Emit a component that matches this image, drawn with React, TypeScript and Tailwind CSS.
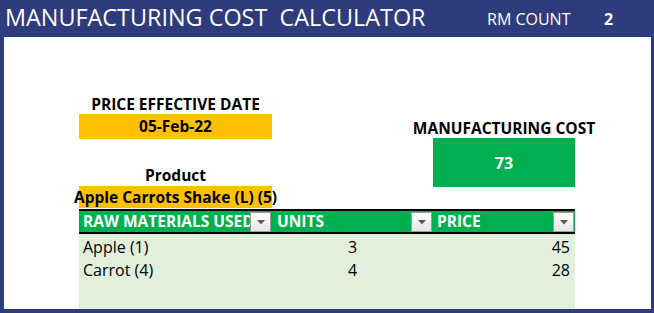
import React from 'react';

const rows = [
  { name: 'Apple (1)', units: 3, price: 45 },
  { name: 'Carrot (4)', units: 4, price: 28 },
];

function FilterButton() {
  return (
    <div className="absolute right-[1px] top-[1px] w-[21px] h-[20px] border border-[#9c9c9c] bg-gradient-to-b from-white to-[#e6e6e6] flex items-center justify-center">
      <svg width="8" height="5" viewBox="0 0 8 5">
        <path d="M0 0 L8 0 L4 4.5 Z" fill="#5a5a5a" />
      </svg>
    </div>
  );
}

export default function App() {
  return (
    <div className="w-[654px] h-[313px] bg-[#2e3b7c] flex flex-col font-['Open_Sans',sans-serif] overflow-hidden">
      {/* Title band */}
      <div className="h-[37px] flex items-center text-white shrink-0">
        <div className="pl-[5px] w-[487px] text-[23.4px] leading-none whitespace-pre -mt-[1px]">
          MANUFACTURING COST  CALCULATOR
        </div>
        <div className="w-[117px] text-[16px] leading-none">RM COUNT</div>
        <div className="text-[16px] font-bold leading-none">2</div>
      </div>

      {/* Sheet */}
      <div className="flex-1 ml-[4px] mr-[3px] mb-[4px] bg-white pl-[75px] text-black">
        <div className="flex">
          {/* Left column */}
          <div className="w-[193px] pt-[56px] flex flex-col text-[15.5px] font-bold">
            <div className="h-[21px] leading-[22px] text-center">PRICE EFFECTIVE DATE</div>
            <div className="h-[25px] leading-[25px] bg-[#ffc000] text-center">05-Feb-22</div>
            <div className="h-[26px]" />
            <div className="h-[21px] leading-[21px] text-center">Product</div>
            <div className="h-[22px] leading-[22px] bg-[#ffc000] flex justify-center whitespace-nowrap">
              <span>Apple Carrots Shake (L) (5)</span>
            </div>
          </div>

          {/* Right column */}
          <div className="ml-[161px] w-[142px] pt-[82px] flex flex-col text-[15.5px] font-bold">
            <div className="h-[18px] leading-[18px] flex justify-center whitespace-nowrap">
              <span>MANUFACTURING COST</span>
            </div>
            <div className="mt-[1px] h-[49px] bg-[#00b050] text-white text-[16px] flex items-center justify-center">
              73
            </div>
          </div>
        </div>

        {/* Table */}
        <div className="w-[496px] mt-[1px] border-t-2 border-black">
          <div className="grid grid-cols-[193px_161px_142px] h-[23px] bg-[#00b050] border-b-2 border-black text-white font-bold text-[15.5px]">
            <div className="relative pl-[4px] leading-[21px] overflow-hidden whitespace-nowrap">
              RAW MATERIALS USED
              <FilterButton />
            </div>
            <div className="relative pl-[5px] leading-[21px]">
              UNITS
              <FilterButton />
            </div>
            <div className="relative pl-[4px] leading-[21px]">
              PRICE
              <FilterButton />
            </div>
          </div>
          <div className="h-[75px] pt-[2px] bg-[#e2efda] text-[16px]">
            {rows.map((r) => (
              <div key={r.name} className="grid grid-cols-[193px_161px_142px] h-[23px] leading-[23px]">
                <div className="pl-[4px]">{r.name}</div>
                <div className="text-center">{r.units}</div>
                <div className="text-right pr-[5px]">{r.price}</div>
              </div>
            ))}
          </div>
        </div>
      </div>
    </div>
  );
}
